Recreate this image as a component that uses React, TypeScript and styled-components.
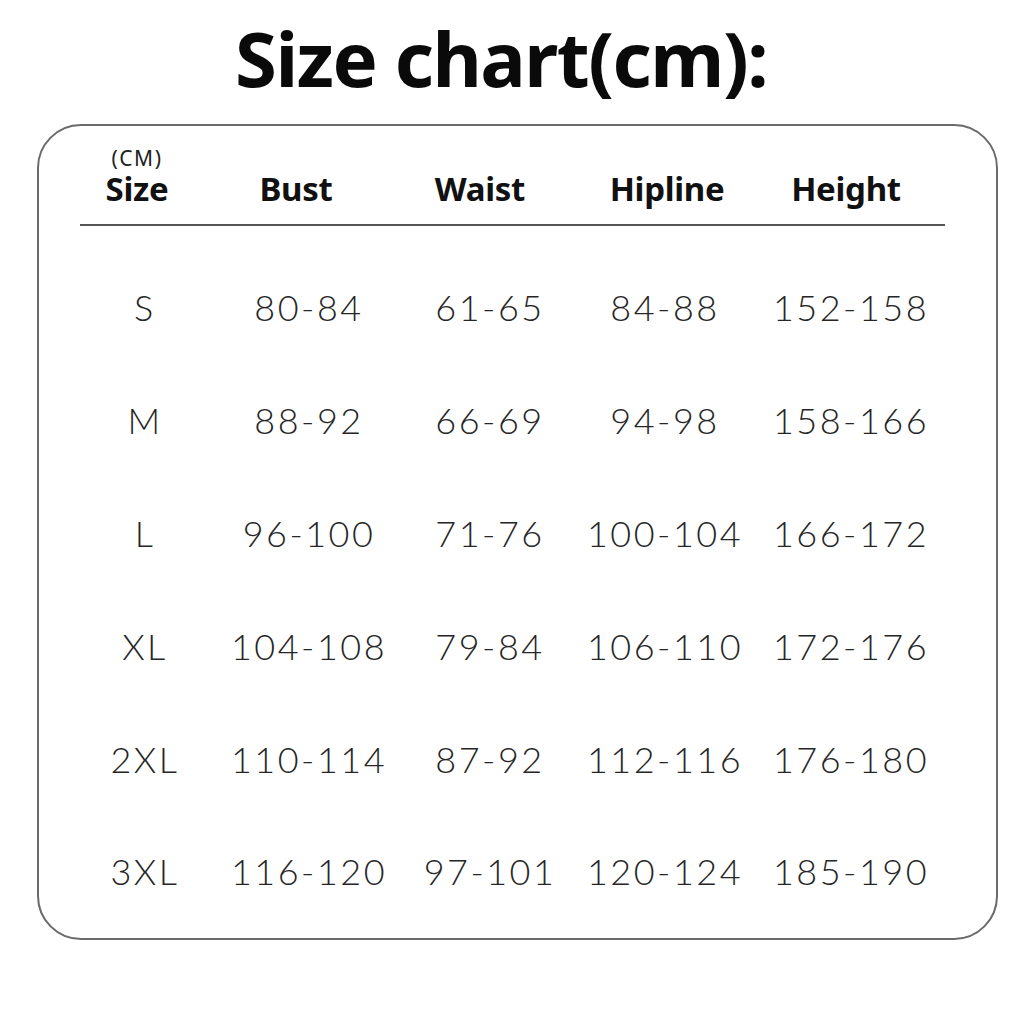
import React from "react";
import { styled, createGlobalStyle } from "styled-components";

const GlobalStyle = createGlobalStyle`
	html, body {
		margin: 0;
		padding: 0;
		background: #ffffff;
	}
`;

// header labels with a small nudge each, to sit where the print puts them
const headers = [
	{ label: "Bust", shift: -13 },
	{ label: "Waist", shift: -10 },
	{ label: "Hipline", shift: 2 },
	{ label: "Height", shift: -5 },
];

const rows = [
	["S", "80-84", "61-65", "84-88", "152-158"],
	["M", "88-92", "66-69", "94-98", "158-166"],
	["L", "96-100", "71-76", "100-104", "166-172"],
	["XL", "104-108", "79-84", "106-110", "172-176"],
	["2XL", "110-114", "87-92", "112-116", "176-180"],
	["3XL", "116-120", "97-101", "120-124", "185-190"],
];

const App: React.FC = () => {
	return (
		<Page>
			<GlobalStyle />
			<Title>Size chart(cm):</Title>
			<Card>
				<HeaderRow>
					<HeadCell $shift={-8}>
						<Unit>(CM)</Unit>
						<span>Size</span>
					</HeadCell>
					{headers.map((h) => (
						<HeadCell key={h.label} $shift={h.shift}>
							{h.label}
						</HeadCell>
					))}
				</HeaderRow>
				<Body>
					{rows.map((r) => (
						<DataRow key={r[0]}>
							{r.map((v, i) => (
								<Cell key={i}>{v}</Cell>
							))}
						</DataRow>
					))}
				</Body>
			</Card>
		</Page>
	);
};

export default App;

const Page = styled.div`
	width: 1024px;
	height: 1024px;
	box-sizing: border-box;
	padding-top: 10px;
	background: #fff;
`;

const Title = styled.h1`
	margin: 0;
	height: 114px;
	padding-right: 22px;
	text-align: center;
	font-family: "Noto Sans", sans-serif;
	font-weight: 700;
	font-size: 76px;
	letter-spacing: -1.5px;
	line-height: 96px;
	color: #0a0a0a;
`;

const Card = styled.div`
	box-sizing: border-box;
	width: 961px;
	height: 816px;
	margin-left: 37px;
	border: 2px solid #6a6a6a;
	border-radius: 44px;
	padding: 0 51px 0 41px;
`;

const Columns = `
	display: grid;
	grid-template-columns: 130px 198px 164px 186px 186px;
`;

const HeaderRow = styled.div`
	${Columns}
	align-items: end;
	height: 100px;
	box-sizing: border-box;
	padding-bottom: 18px;
	border-bottom: 2px solid #555;
`;

const HeadCell = styled.div<{ $shift: number }>`
	display: flex;
	flex-direction: column;
	align-items: center;
	font-family: "Noto Sans", sans-serif;
	font-weight: 700;
	font-size: 33px;
	line-height: 34px;
	letter-spacing: -0.3px;
	color: #111;
	transform: translateX(${(p) => p.$shift}px);
`;

const Unit = styled.span`
	font-weight: 400;
	font-size: 21px;
	line-height: 20px;
	margin-bottom: 4px;
	letter-spacing: 1.5px;
	color: #222;
`;

const Body = styled.div`
	padding-top: 25px;
`;

const DataRow = styled.div`
	${Columns}
	align-items: center;
	height: 112.8px;
`;

const Cell = styled.div`
	text-align: center;
	font-family: "Lato", sans-serif;
	font-weight: 300;
	font-size: 36px;
	letter-spacing: 2.5px;
	color: #262626;
`;
